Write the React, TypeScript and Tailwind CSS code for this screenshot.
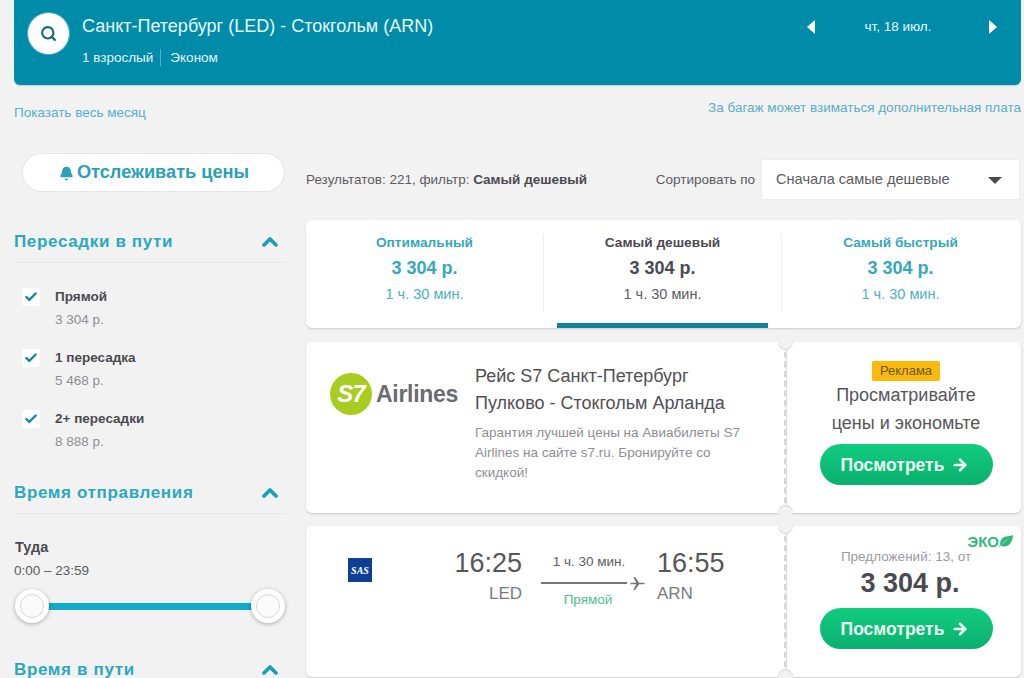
import React from "react";
import { Search, Check, ChevronUp, Bell, ArrowRight } from "lucide-react";

function Section({ title, className = "" }: { title: string; className?: string }) {
  return (
    <div className={`flex items-center justify-between border-b border-[#e6e6e8] pr-[4px] ${className}`}>
      <span className="text-[17px] font-bold leading-[20px] tracking-[0.65px] text-[#2ba8bf]">{title}</span>
      <ChevronUp size={24} strokeWidth={3.8} className="text-[#1aa0b5]" />
    </div>
  );
}

function Stop({ label, price }: { label: string; price: string }) {
  return (
    <div className="flex h-[61px] items-start">
      <div className="flex h-[18px] w-[18px] items-center justify-center rounded-[3px] bg-white">
        <Check size={14} strokeWidth={4} className="text-[#14879c]" />
      </div>
      <div className="ml-[15px]">
        <div className="text-[13.5px] font-bold leading-[18px] text-[#4a4a50]">{label}</div>
        <div className="mt-[5px] text-[13.5px] leading-[18px] text-[#8e8e93]">{price}</div>
      </div>
    </div>
  );
}

function Tab({ name, active = false }: { name: string; active?: boolean }) {
  const c = active ? "text-[#4a4a50]" : "text-[#35a8bd]";
  return (
    <div className={`flex h-[84px] flex-1 flex-col items-center ${c}`}>
      <div className="text-[13.7px] font-bold leading-[18px]">{name}</div>
      <div className="mt-[5px] text-[18px] font-bold leading-[22px]">3 304 р.</div>
      <div className="mt-[5px] text-[14.5px] leading-[20px] opacity-90">1 ч. 30 мин.</div>
    </div>
  );
}

function ViewButton() {
  return (
    <div className="flex h-[41px] w-[173px] items-center justify-center gap-[7px] rounded-full bg-gradient-to-b from-[#10cc80] to-[#0bb06e] pr-[2px] pt-[1px] text-[17.5px] font-bold text-[#e9fbf3]">
      Посмотреть
      <ArrowRight size={18} strokeWidth={3.5} />
    </div>
  );
}

function Notches() {
  return (
    <>
      <div className="absolute left-[-9px] top-[-7px] h-[15px] w-[15px] rounded-full bg-[#f2f2f3] shadow-[inset_0_-1px_1px_#d4d4d6]" />
      <div className="absolute bottom-[-7px] left-[-9px] h-[15px] w-[15px] rounded-full bg-[#f2f2f3] shadow-[inset_0_1px_1px_#d4d4d6]" />
    </>
  );
}

function Thumb() {
  return (
    <div className="relative z-10 flex h-[34px] w-[34px] items-center justify-center rounded-full bg-white shadow-[0_1px_4px_rgba(0,0,0,0.3)]">
      <div className="h-[24px] w-[24px] rounded-full border border-[#d6d6d6] bg-[#fbfbfb]" />
    </div>
  );
}

export default function App() {
  return (
    <div className="h-[678px] w-[1024px] overflow-hidden bg-[#f2f2f3] font-['Liberation_Sans',Arial,sans-serif]">
      <header className="ml-[14px] flex h-[85px] w-[1007px] items-start justify-between rounded-b-[6px] bg-[#008ca9] shadow-[0_1px_1px_rgba(0,80,100,0.2)]">
        <div className="flex items-start pl-[14px] pt-[13px]">
          <div className="flex h-[41px] w-[41px] items-center justify-center rounded-full bg-white shadow-[0_0_0_1px_rgba(255,255,255,0.3)]">
            <Search size={17} strokeWidth={3} className="text-[#14687a]" />
          </div>
          <div className="ml-[13px]">
            <div className="mt-[2px] text-[18px] leading-[22px] text-[#e8f8fb]">Санкт-Петербург (LED) - Стокгольм (ARN)</div>
            <div className="mt-[12px] flex items-center text-[13.5px] leading-[17px] text-[#e2f4f8]">
              <span className="border-r border-[#4fb3c8] pr-[7px]">1 взрослый</span>
              <span className="pl-[9px]">Эконом</span>
            </div>
          </div>
        </div>
        <div className="mr-[24px] mt-[20px] flex w-[190px] items-center justify-between">
          <div className="h-0 w-0 border-y-[7px] border-r-[8px] border-y-transparent border-r-white" />
          <span className="mr-[8px] text-[13.5px] leading-[14px] text-[#e8f8fb]">чт, 18 июл.</span>
          <div className="h-0 w-0 border-y-[7px] border-l-[8px] border-y-transparent border-l-white" />
        </div>
      </header>

      <div className="ml-[14px] mt-[15px] flex h-[24px] w-[1007px] items-start justify-between text-[13.5px] text-[#5aaec6]">
        <span className="mt-[5px] leading-[16px]">Показать весь месяц</span>
        <span className="leading-[16px]">За багаж может взиматься дополнительная плата</span>
      </div>

      <div className="ml-[14px] mt-[29px] flex items-start">
        <aside className="w-[272px] shrink-0">
          <div className="ml-[8px] flex h-[39px] w-[263px] items-center justify-center gap-[3px] rounded-full border border-[#e4e4e6] bg-white pl-[1px] pt-[1px] text-[18.2px] font-bold text-[#2ba0b8]">
            <Bell size={15} fill="currentColor" strokeWidth={2} />
            Отслеживать цены
          </div>
          <Section title="Пересадки в пути" className="mt-[29px] h-[42px]" />
          <div className="ml-[8px] mt-[25px]">
            <Stop label="Прямой" price="3 304 р." />
            <Stop label="1 пересадка" price="5 468 р." />
            <Stop label="2+ пересадки" price="8 888 р." />
          </div>
          <Section title="Время отправления" className="mt-[1px] h-[42px]" />
          <div className="ml-[1px] mt-[23px] text-[14.5px] font-bold leading-[20px] text-[#4a4a50]">Туда</div>
          <div className="mt-[5px] text-[13.5px] leading-[18px] text-[#5c5c60]">0:00 – 23:59</div>
          <div className="ml-[1px] mt-[9px] flex w-[270px] items-center">
            <Thumb />
            <div className="mx-[-2px] h-[7px] flex-1 bg-[#10abc9]" />
            <Thumb />
          </div>
          <Section title="Время в пути" className="mt-[27px] h-[40px] border-b-0" />
        </aside>

        <main className="ml-[20px] mt-[7px] w-[715px]">
          <div className="flex h-[39px] items-center pr-[2px] text-[13.5px] text-[#5c5c60]">
            <span className="pt-[1px]">
              Результатов: 221, фильтр: <b className="text-[#4a4a50]">Самый дешевый</b>
            </span>
            <span className="ml-auto mr-[7px] pt-[1px]">Сортировать по</span>
            <div className="flex h-[39px] w-[257px] items-center justify-between bg-white pl-[14px] pr-[17px] pt-[1px] text-[14.6px] text-[#5c5c60] shadow-[0_0_1px_rgba(0,0,0,0.15)]">
              Сначала самые дешевые
              <div className="h-0 w-0 border-x-[7px] border-t-[7px] border-x-transparent border-t-[#4a4a50]" />
            </div>
          </div>

          <div className="relative mt-[21px] flex h-[108px] items-start rounded-[6px] bg-white pr-[2px] pt-[14px] shadow-[0_1px_2px_rgba(0,0,0,0.18)]">
            <Tab name="Оптимальный" />
            <div className="h-[78px] w-px bg-[#efeff0]" />
            <Tab name="Самый дешевый" active />
            <div className="h-[78px] w-px bg-[#efeff0]" />
            <Tab name="Самый быстрый" />
            <div className="absolute bottom-0 left-[251px] h-[5px] w-[211px] bg-[#14829b]" />
          </div>

          <div className="mt-[14px] flex h-[171px] gap-[1px]">
            <div className="flex w-[480px] rounded-l-[6px] border-r-2 border-dashed border-r-[#d8d8da] bg-white shadow-[0_1px_2px_rgba(0,0,0,0.18)]">
              <div className="ml-[24px] mt-[31px] flex h-[42px] w-[145px] items-center">
                <div className="flex h-[42px] w-[42px] shrink-0 items-center justify-center rounded-full bg-[#a8cc1f]">
                  <span className="text-[24px] font-bold italic leading-none tracking-[-1px] text-white">S7</span>
                </div>
                <span className="ml-[4px] text-[23px] font-bold leading-none tracking-[-0.3px] text-[#6b6b70]">Airlines</span>
              </div>
              <div className="w-[280px]">
                <div className="mt-[21px] text-[18px] leading-[27px] text-[#4f4f54]">
                  <div>Рейс S7 Санкт-Петербург</div>
                  <div>Пулково - Стокгольм Арланда</div>
                </div>
                <div className="mt-[6px] text-[13.5px] leading-[20px] text-[#8e8e93]">
                  Гарантия лучшей цены на Авиабилеты S7 Airlines на сайте s7.ru. Бронируйте со скидкой!
                </div>
              </div>
            </div>
            <div className="relative flex w-[234px] flex-col items-center rounded-r-[6px] bg-white pl-[4px] shadow-[0_1px_2px_rgba(0,0,0,0.18)]">
              <Notches />
              <div className="mt-[19px] flex h-[20px] w-[68px] items-center justify-center rounded-[2px] bg-[#fbb80f] text-[13px] text-[#6a5a20]">Реклама</div>
              <div className="text-center text-[18px] leading-[28px] text-[#56565b]">
                <div>Просматривайте</div>
                <div>цены и экономьте</div>
              </div>
              <div className="mt-[7px]"><ViewButton /></div>
            </div>
          </div>

          <div className="mt-[13px] flex h-[151px] gap-[1px]">
            <div className="flex w-[480px] items-start rounded-l-[6px] border-r-2 border-dashed border-r-[#d8d8da] bg-white shadow-[0_1px_2px_rgba(0,0,0,0.18)]">
              <div className="ml-[42px] mt-[32px] flex h-[24px] w-[24px] items-center justify-center bg-[#0f3f94]">
                <span className="font-['Liberation_Serif',serif] text-[10px] font-bold italic text-white">SAS</span>
              </div>
              <div className="ml-[76px] mt-[21px] w-[74px] text-right">
                <div className="text-[27px] leading-[32px] text-[#56565b]">16:25</div>
                <div className="mt-[5px] text-[17px] leading-[20px] text-[#7a7a7e]">LED</div>
              </div>
              <div className="ml-[19px] mt-[28px] flex w-[104px] flex-col">
                <div className="w-[96px] whitespace-nowrap text-center text-[13.5px] leading-[16px] text-[#5c5c60]">1 ч. 30 мин.</div>
                <div className="mt-[5px] flex h-[16px] items-center">
                  <div className="h-[2px] w-[86px] bg-[#77777b]" />
                  <svg viewBox="0 0 16 16" className="ml-[3px] h-[15px] w-[15px]" fill="#77777b">
                    <path d="M0.5 7.2 L6.6 7.2 L3.6 1 L5.4 1 L9.8 7.2 L13.6 7.2 C15 7.2 15.8 7.6 15.8 8 C15.8 8.4 15 8.8 13.6 8.8 L9.8 8.8 L5.4 15 L3.6 15 L6.6 8.8 L0.5 8.8 Z" />
                  </svg>
                </div>
                <div className="mt-[1px] w-[94px] text-center text-[13.5px] leading-[16px] text-[#4cc08a]">Прямой</div>
              </div>
              <div className="ml-[12px] mt-[21px]">
                <div className="text-[27px] leading-[32px] text-[#56565b]">16:55</div>
                <div className="mt-[5px] text-[17px] leading-[20px] text-[#7a7a7e]">ARN</div>
              </div>
            </div>
            <div className="relative flex w-[234px] flex-col items-center rounded-r-[6px] bg-white pl-[4px] shadow-[0_1px_2px_rgba(0,0,0,0.18)]">
              <Notches />
              <div className="absolute right-[8px] top-[8px] flex items-center text-[15px] font-bold leading-none text-[#2fb87e]">
                ЭКО
                <svg viewBox="0 0 14 13" className="h-[13px] w-[14px]">
                  <path d="M14 0 C13.5 8 9.5 12 4.5 11.5 C3.5 11.4 2.6 11 2 10.5 L0.5 12.5 L0 12 L1.5 10 C0.5 7 2 3.5 5.5 2 C8 1 11.5 1.2 14 0 Z M3 9.5 C5 7 7.5 5 10.5 3.5 C7.5 4.5 4.8 6.3 3 9.5 Z" fill="currentColor" fillRule="evenodd" />
                </svg>
              </div>
              <div className="mt-[23px] text-[13.5px] leading-[16px] text-[#9a9a9e]">Предложений: 13, от</div>
              <div className="ml-[8px] mt-[2px] text-[27px] font-bold leading-[32px] text-[#4a4a50]">3 304 р.</div>
              <div className="mt-[9px]"><ViewButton /></div>
            </div>
          </div>
        </main>
      </div>
    </div>
  );
}
